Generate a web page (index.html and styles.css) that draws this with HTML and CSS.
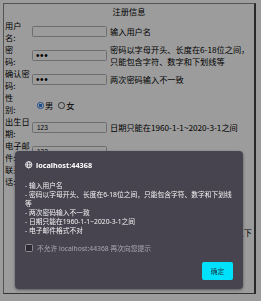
FILE: index.html
```html
<!DOCTYPE html>
<html lang="zh">
<head>
<meta charset="utf-8">
<title>注册信息</title>
<link rel="stylesheet" href="styles.css">
</head>
<body>
<div class="page">
  <div class="title">注册信息</div>
  <div class="form">
    <div class="label">用户名:</div>
    <div class="field"><input class="text" type="text"></div>
    <div class="msg">输入用户名</div>

    <div class="label">密　码:</div>
    <div class="field"><input class="text pw" type="password" value="123"></div>
    <div class="msg">密码以字母开头、长度在6-18位之间，只能包含字符、数字和下划线等</div>

    <div class="label">确认密码:</div>
    <div class="field"><input class="text pw" type="password" value="123"></div>
    <div class="msg">两次密码输入不一致</div>

    <div class="label">性　别:</div>
    <div class="field radios">
      <label class="opt"><input class="radio" type="radio" name="sex" checked>男</label>
      <label class="opt"><input class="radio" type="radio" name="sex">女</label>
    </div>
    <div class="msg"></div>

    <div class="label">出生日期:</div>
    <div class="field"><input class="text" type="text" value="123"></div>
    <div class="msg">日期只能在1960-1-1~2020-3-1之间</div>

    <div class="label">电子邮件:</div>
    <div class="field"><input class="text" type="text" value="123"></div>
    <div class="msg"></div>

    <div class="label">联系电话:</div>
    <div class="field"><input class="text" type="text"></div>
    <div class="msg"></div>

    <div class="note">以下</div>
  </div>
</div>

<div class="overlay"></div>

<div class="dialog">
  <div class="dlg-head">
    <svg class="globe" viewBox="0 0 10 10" aria-hidden="true">
      <circle cx="5" cy="5" r="4.2" fill="none" stroke="#fff" stroke-width="1.1"/>
      <ellipse cx="5" cy="5" rx="1.8" ry="4.2" fill="none" stroke="#fff" stroke-width="1"/>
      <line x1="0.8" y1="5" x2="9.2" y2="5" stroke="#fff" stroke-width="1"/>
    </svg>
    <span class="host">localhost:44368</span>
  </div>
  <div class="dlg-body">
    <div class="line">&nbsp;</div>
    <div class="line">- 输入用户名</div>
    <div class="line">- 密码以字母开头、长度在6-18位之间，只能包含字符、数字和下划线等</div>
    <div class="line">- 两次密码输入不一致</div>
    <div class="line">- 日期只能在1960-1-1~2020-3-1之间</div>
    <div class="line">- 电子邮件格式不对</div>
  </div>
  <label class="dlg-check"><span class="box"></span>不允许 localhost:44368 再次向您提示</label>
  <div class="dlg-foot"><button class="ok" type="button">确定</button></div>
</div>
</body>
</html>
```

FILE: styles.css
```css
html, body {
  margin: 0;
  padding: 0;
  background: #fff;
}

body {
  width: 261px;
  height: 301px;
  overflow: hidden;
  font-family: "Noto Sans CJK SC", "Noto Sans", sans-serif;
  font-size: 8.2px;
  line-height: 11.5px;
  color: #000;
}

.page {
  margin: 3px;
  width: 250px;
  height: 289px;
  border: 1px solid #8a8a8a;
  border-right: 2px solid #444;
  border-bottom-color: #555;
}

.title {
  text-align: center;
  padding-top: 2px;
  height: 13.5px;
}

.form {
  display: grid;
  grid-template-columns: 28px 77px 1fr;
  grid-auto-rows: 24px;
  align-items: center;
}

.label {
  padding: 0 1.5px 0 1px;
}

.field {
  display: flex;
  align-items: center;
}

.text {
  box-sizing: border-box;
  width: 75px;
  height: 11.5px;
  margin: 0;
  padding: 0 4px;
  border: 1px solid #b4b4b4;
  border-radius: 1.5px;
  background: #fff;
  font-family: "Liberation Sans", sans-serif;
  font-size: 6.5px;
  color: #000;
  outline: none;
}

.pw {
  font-size: 10px;
  letter-spacing: 0.6px;
  padding-left: 3px;
}

.radios {
  gap: 5px;
  padding-left: 5px;
  padding-top: 4px;
}

.opt {
  display: flex;
  align-items: center;
  gap: 1.5px;
}

.radio {
  appearance: none;
  -webkit-appearance: none;
  box-sizing: border-box;
  width: 6.5px;
  height: 6.5px;
  margin: 0;
  border: 1px solid #555;
  border-radius: 50%;
  background: #fff;
}

.radio:checked {
  border-color: #2f7fe8;
  background: radial-gradient(circle, #2f7fe8 0 1.6px, #fff 1.9px);
}

.msg {
  padding-left: 1px;
  padding-right: 4px;
}

.note {
  grid-column: 1 / -1;
  align-self: start;
  margin-top: 39px;
  padding-right: 2px;
  text-align: right;
}

.overlay {
  position: fixed;
  inset: 0;
  background: rgba(0, 0, 0, 0.39);
}

.dialog {
  position: absolute;
  left: 15px;
  top: 151px;
  width: 208px;
  height: 119px;
  padding: 9.5px 10px 9px 10px;
  background: #47444f;
  border-radius: 4px;
  box-shadow: 0 1px 3px rgba(0, 0, 0, 0.45);
  font-family: "Noto Sans", "Noto Sans CJK SC", sans-serif;
  font-size: 6.75px;
  line-height: 9px;
  color: #f2f2f2;
}

.dlg-head {
  display: flex;
  align-items: center;
  gap: 3.5px;
  height: 9px;
}

.globe {
  width: 7.5px;
  height: 7.5px;
  display: block;
}

.host {
  font-weight: 700;
  font-size: 7.3px;
  color: #fff;
}

.dlg-body {
  margin-top: 2px;
}

.line {
  min-height: 9px;
}

.dlg-check {
  display: flex;
  align-items: center;
  gap: 4px;
  margin-top: 9.5px;
  height: 8px;
  color: #a9a7b0;
}

.box {
  box-sizing: border-box;
  width: 8px;
  height: 8px;
  border: 1px solid #8d8b94;
  border-radius: 1.5px;
  background: #2c2a33;
}

.dlg-foot {
  display: flex;
  justify-content: flex-end;
  margin-top: 10px;
}

.ok {
  width: 31px;
  height: 18px;
  margin: 0;
  padding: 0;
  border: none;
  border-radius: 2px;
  background: #00e2fc;
  color: #17323c;
  font-family: "Noto Sans CJK SC", sans-serif;
  font-size: 6.8px;
  line-height: 18px;
}
```
